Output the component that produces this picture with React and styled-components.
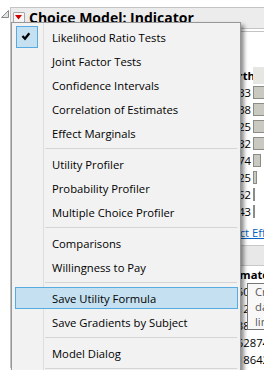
import React from 'react';
import styled, { createGlobalStyle } from 'styled-components';

const GlobalStyle = createGlobalStyle`
  html, body {
    margin: 0;
    padding: 0;
    background: #fff;
  }
  body {
    font-family: "Open Sans", "Noto Sans", sans-serif;
    overflow: hidden;
  }
`;

const Page = styled.div`
  position: relative;
  width: 264px;
  height: 370px;
  overflow: hidden;
  box-sizing: border-box;
  padding-top: 7px;
  background: #fff;
`;

/* ---------- report behind the menu ---------- */

const Outline = styled.div`
  display: flex;
  align-items: flex-start;
`;

const Disclosure = styled.svg`
  flex: none;
  width: 8px;
  height: 8px;
  margin: 3px 1px 0 1px;
`;

const OutlineBox = styled.div`
  flex: none;
  width: 380px;
  border-top: 1px solid #c4c4c4;
  border-left: 1px solid #c4c4c4;
`;

const TitleBar = styled.div`
  display: flex;
  align-items: center;
  gap: 4px;
  height: 20px;
  padding-left: 2px;
  background: #ececec;
  border-bottom: 1px solid #c4c4c4;
`;

const RedButton = styled.div`
  flex: none;
  width: 12px;
  height: 12px;
  box-sizing: border-box;
  border: 1px solid #a8a8a8;
  border-radius: 1px;
  background: #f6f6f6;
  display: flex;
`;

const Title = styled.div`
  font-weight: 700;
  font-size: 14px;
  line-height: 20px;
  color: #000;
  white-space: nowrap;
`;

const Body = styled.div`
  padding: 2px 0 0 10px;
`;

const Nested = styled.div`
  border-top: 1px solid #c4c4c4;
  border-left: 1px solid #c4c4c4;
  padding: 35px 0 0 8px;
`;

const Grid = styled.div`
  display: grid;
  grid-template-columns: ${p => p.$cols};
  column-gap: 2px;
  font-size: 11.25px;
  color: #000;
`;

const Cell = styled.div`
  height: 17px;
  line-height: 17px;
  white-space: nowrap;
  text-align: ${p => (p.$num ? 'right' : 'left')};
  font-weight: ${p => (p.$head ? 700 : 400)};
  background: ${p => (p.$shade ? '#e6e6e2' : 'transparent')};
`;

const BarCell = styled.div`
  height: 17px;
  display: flex;
  align-items: center;
`;

const Bar = styled.div`
  height: 13px;
  box-sizing: border-box;
  background: #c9c9c1;
  border: 1px solid #8c8c86;
`;

const LinkRow = styled.div`
  margin-top: 5px;
  padding-left: 188px;
  line-height: 16px;
  font-size: 11.25px;
`;

const Link = styled.span`
  color: #0563c1;
  text-decoration: underline;
`;

const SubTitleBar = styled.div`
  margin-top: 4px;
  height: 19px;
  background: #e8e8e8;
  border-top: 1px solid #c8c8c8;
  border-bottom: 1px solid #c8c8c8;
`;

/* ---------- popup menu ---------- */

const Menu = styled.div`
  position: absolute;
  left: 11px;
  top: 22px;
  width: 230px;
  height: 420px;
  box-sizing: border-box;
  display: flex;
  flex-direction: column;
  padding: 2px 2px 0 3px;
  border: 1px solid #979797;
  background: linear-gradient(90deg, #f2f2f2 0 31px, #dedede 31px 32px, #f2f2f2 32px);
  box-shadow: 3px 3px 4px rgba(0, 0, 0, 0.45);
  font-size: 11.25px;
  color: #000;
`;

const Item = styled.div`
  flex: none;
  display: flex;
  align-items: center;
  height: 22px;
  margin: 1px 0;
  background: ${p => (p.$hot ? '#c5e0f1' : 'transparent')};
  box-shadow: ${p => (p.$hot ? 'inset 0 0 0 1px #56abe0' : 'none')};
`;

const Gutter = styled.div`
  flex: none;
  width: 30px;
  height: 22px;
  display: flex;
`;

const CheckBox = styled.div`
  width: 22px;
  height: 22px;
  margin-left: 1px;
  box-sizing: border-box;
  background: #c5e0f1;
  border: 1px solid #56abe0;
  display: flex;
`;

const Label = styled.span`
  padding-left: 7px;
  white-space: nowrap;
`;

const Separator = styled.div`
  flex: none;
  height: 1px;
  margin: 3px 1px 3px 30px;
  background: #d5d5d5;
`;

const Tooltip = styled.div`
  position: absolute;
  left: 247px;
  top: 283px;
  width: 210px;
  padding: 0 7px;
  border: 1px solid #767676;
  background: #f8f8f8;
  color: #575757;
  font-size: 11.25px;
  line-height: 15px;
  white-space: nowrap;
`;

const summary = [
  ['Price', '12.833', 12.833],
  ['Brand', '9.638', 9.638],
  ['Speed', '7.925', 7.925],
  ['Storage', '5.832', 5.832],
  ['Screen', '1.274', 1.274],
  ['Battery', '0.725', 0.725],
  ['Weight', '0.352', 0.352],
  ['Color', '0.243', 0.243],
];

const estimates = [
  ['Price[Low]', '0.150719'],
  ['Brand[A]', '0.812566'],
  ['Speed[Fast]', '0.238104'],
  ['Storage[64]', '0.462874'],
  ['Screen[Big]', '0.318642'],
];

const menu = [
  [{ label: 'Likelihood Ratio Tests', checked: true }, { label: 'Joint Factor Tests' }, { label: 'Confidence Intervals' }, { label: 'Correlation of Estimates' }, { label: 'Effect Marginals' }],
  [{ label: 'Utility Profiler' }, { label: 'Probability Profiler' }, { label: 'Multiple Choice Profiler' }],
  [{ label: 'Comparisons' }, { label: 'Willingness to Pay' }],
  [{ label: 'Save Utility Formula', hot: true }, { label: 'Save Gradients by Subject' }],
  [{ label: 'Model Dialog' }],
  [{ label: 'Redo' }, { label: 'Save Script' }],
];

const Check = () => (
  <svg width="20" height="20" viewBox="0 0 20 20">
    <polyline points="5.5,9 8,11.8 12.3,6.3" fill="none" stroke="#000" strokeWidth="2.3" />
  </svg>
);

export default function App() {
  return (
    <Page>
      <GlobalStyle />
      <Outline>
        <Disclosure viewBox="0 0 8 8">
          <polygon points="7.5,0.5 7.5,7.5 0.5,7.5" fill="#e4e4e4" stroke="#8a8a8a" strokeWidth="1" />
        </Disclosure>
        <OutlineBox>
          <TitleBar>
            <RedButton>
              <svg width="10" height="10" viewBox="0 0 10 10">
                <polygon points="1,2 8,2 4.5,6.5" fill="#d00000" />
              </svg>
            </RedButton>
            <Title>Choice Model: Indicator</Title>
          </TitleBar>
          <Body>
            <Nested>
              <Grid $cols="168px 51px 90px">
                <Cell $head>Source</Cell>
                <Cell $head $num>LogWorth</Cell>
                <Cell $shade />
                {summary.map(([src, v, n]) => (
                  <React.Fragment key={src}>
                    <Cell>{src}</Cell>
                    <Cell $num>{v}</Cell>
                    <BarCell>
                      <Bar style={{ width: Math.max(2, Math.round(n * 6)) }} />
                    </BarCell>
                  </React.Fragment>
                ))}
              </Grid>
              <LinkRow>
                <Link>Select Effects</Link>
              </LinkRow>
              <SubTitleBar />
              <Grid $cols="187px 50px 60px">
                <Cell $head>Term</Cell>
                <Cell $head $num>Estimate</Cell>
                <Cell $head $num>Std Error</Cell>
                {estimates.map(([t, e]) => (
                  <React.Fragment key={t}>
                    <Cell>{t}</Cell>
                    <Cell $num>{e}</Cell>
                    <Cell $num>0.0412</Cell>
                  </React.Fragment>
                ))}
              </Grid>
            </Nested>
          </Body>
        </OutlineBox>
      </Outline>

      <Menu>
        {menu.map((group, gi) => (
          <React.Fragment key={gi}>
            {gi > 0 && <Separator />}
            {group.map(it => (
              <Item key={it.label} $hot={it.hot}>
                <Gutter>
                  {it.checked && (
                    <CheckBox>
                      <Check />
                    </CheckBox>
                  )}
                </Gutter>
                <Label>{it.label}</Label>
              </Item>
            ))}
          </React.Fragment>
        ))}
      </Menu>

      <Tooltip>
        <div>Creates a new column in the</div>
        <div>data table that contains the</div>
        <div>linear utility formula.</div>
      </Tooltip>
    </Page>
  );
}
